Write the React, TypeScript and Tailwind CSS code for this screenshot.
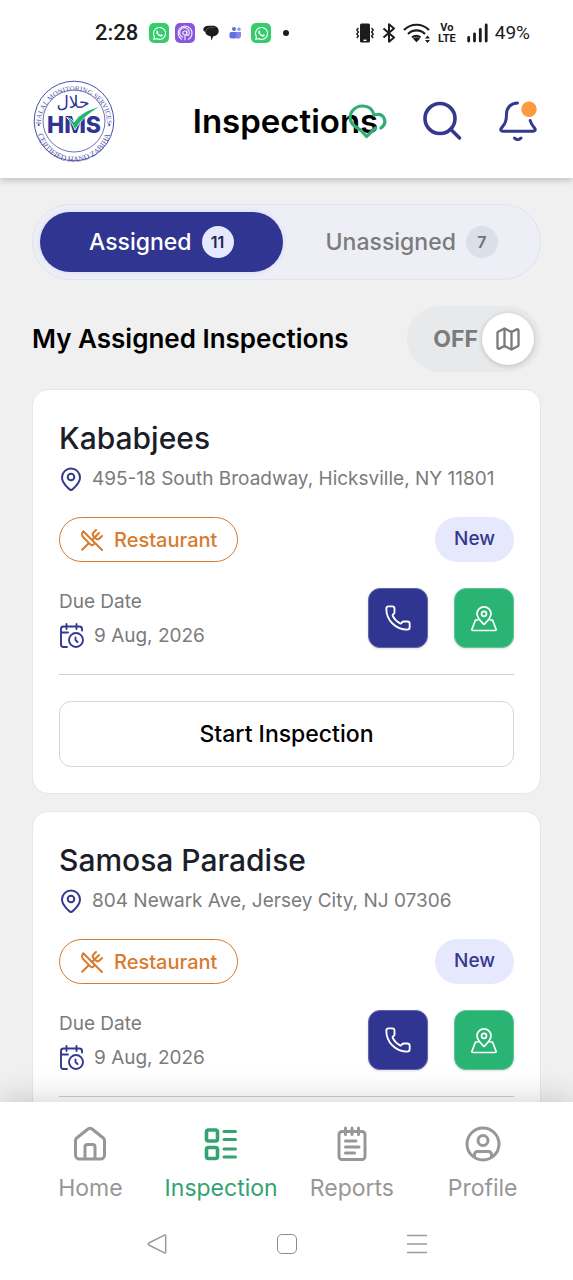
import { useState } from "react";
import type { ReactNode } from "react";
import { FaWhatsapp } from "react-icons/fa";
import { Map, Phone, UtensilsCrossed } from "lucide-react";

type Inspection = { id: number; name: string; address: string; type: string; status: string; due: string };

const inspections: Inspection[] = [
  { id: 1, name: "Kababjees", address: "495-18 South Broadway, Hicksville, NY 11801", type: "Restaurant", status: "New", due: "9 Aug, 2026" },
  { id: 2, name: "Samosa Paradise", address: "804 Newark Ave, Jersey City, NJ 07306", type: "Restaurant", status: "New", due: "9 Aug, 2026" },
];

function StatusBar() {
  return (
    <div className="flex h-16 items-center justify-between pt-[2px] pr-[43px] pl-[95px] font-[Roboto,sans-serif] text-[#1c1c1c]">
      <div className="flex items-center gap-[6px]">
        <span className="mr-[5px] text-[22px] leading-6 font-medium">2:28</span>
        <span className="flex size-5 items-center justify-center rounded-[5px] bg-[#35cc6c] text-white">
          <FaWhatsapp size={15} />
        </span>
        <svg className="size-5" viewBox="0 0 20 20" fill="none" stroke="#f3eaff" strokeWidth="1.2" strokeLinecap="round">
          <rect width="20" height="20" rx="5" fill="#8756dc" stroke="none" />
          <path d="M6.8 16.2a7 7 0 1 1 6.6 0" />
          <path d="M7.8 14a4.8 4.8 0 1 1 5.9-2.2c-.7 1-2 .7-2-.4V7.8" />
          <circle cx="9.8" cy="10" r="2" />
          <path d="M10 12.5v4.2" />
        </svg>
        <svg className="ml-[2px] size-4" viewBox="0 0 16 16" fill="#1c1c1c">
          <path d="M6 .8h4c3.200 0 5.700 2.300 5.700 5.200 0 2.800-2.200 5-5.300 5.200L8.300 15.500 7.800 11.200C4.500 11.200 2.300 9 2.300 6.800 1 6.500.3 5.700.3 4.500.3 2.300 2.600.8 6 .8Z" />
          <path d="M2.500 6.600c.2-2.200 2-3.700 4.800-3.900l4.200-.1" fill="none" stroke="#777" strokeWidth=".6" />
        </svg>
        <svg className="mx-[2px] size-4" viewBox="0 0 16 16">
          <circle cx="7" cy="4" r="2" fill="#5b6ee0" />
          <circle cx="12" cy="4.200" r="1.700" fill="#8b93f0" />
          <path d="M8 7h6v4a3 3 0 0 1-5 2Z" fill="#8a84ea" />
          <rect x="2.500" y="7" width="7" height="6.500" rx="1.800" fill="#5c73e2" />
        </svg>
        <span className="flex size-5 items-center justify-center rounded-[5px] bg-[#35cc6c] text-white">
          <FaWhatsapp size={15} />
        </span>
        <span className="ml-[6px] size-[6px] rounded-full bg-[#1c1c1c]" />
      </div>
      <div className="flex items-center gap-[7px]">
        <svg className="h-5 w-5" viewBox="0 0 20 20" fill="none" stroke="#1c1c1c" strokeWidth="1.400">
          <rect x="5" y=".5" width="10" height="19" rx="1.500" fill="#1c1c1c" stroke="none" />
          <path d="M8.500 17.300h3" stroke="#fff" />
          <path d="M3.400 5 1.800 7l1.600 2-1.600 2 1.600 2-1.600 2M16.600 5l1.600 2-1.600 2 1.600 2-1.600 2 1.600 2" />
        </svg>
        <svg className="h-5 w-[14px]" viewBox="0 0 14 20" fill="none" stroke="#1c1c1c" strokeWidth="2" strokeLinejoin="round">
          <path d="m1.500 5.500 10.500 9L7 18.700V1.300L12 5.500l-10.500 9" />
        </svg>
        <svg className="h-5 w-[28px]" viewBox="0 0 28 20" fill="none" stroke="#1c1c1c" strokeWidth="2.200">
          <path d="M1 7a17.500 17.500 0 0 1 25 0M5 11a12 12 0 0 1 17 0M9 14.500a6.500 6.500 0 0 1 8.500 0" />
          <path d="M10 15.700a5 5 0 0 1 7 0l-3.500 3.500Z" fill="#1c1c1c" stroke="none" />
          <path d="m24.500 12.500 2.500 3h-5ZM24.500 20l2.500-3h-5Z" fill="#1c1c1c" stroke="none" />
        </svg>
        <span className="flex flex-col items-center text-[11px] leading-[11px] font-bold">
          <span>Vo</span>
          <span>LTE</span>
        </span>
        <svg className="ml-1 h-5 w-[21px]" viewBox="0 0 21 20" stroke="#1c1c1c" strokeWidth="2.800" strokeLinecap="round">
          <path d="M1.700 18v-3.500M7.500 18v-7M13.300 18V6.500M19.200 18V2" />
        </svg>
        <span className="text-[19px] leading-6">49%</span>
      </div>
    </div>
  );
}

function Logo() {
  return (
    <svg className="size-[84px] shrink-0" viewBox="0 0 84 84" role="img" aria-label="Halal Monitoring Services">
      <defs>
        <path id="ring-top" d="M8.800 45A33.200 33.200 0 1 1 75.200 45" />
        <path id="ring-bottom" d="M4 45A38 38 0 0 0 80 45" />
      </defs>
      <g fill="none" stroke="#4a4fa8">
        <circle cx="42" cy="42" r="39.800" strokeWidth="1" />
        <circle cx="42" cy="42" r="31" strokeWidth=".8" />
      </g>
      <g fill="#5457a6" fontFamily="Liberation Serif, serif" textAnchor="middle">
        <text fontSize="7">
          <textPath href="#ring-top" startOffset="50%">HALAL MONITORING SERVICES</textPath>
        </text>
        <text fontSize="8">
          <textPath href="#ring-bottom" startOffset="50%">CERTIFIED HAND ZABIHA</textPath>
        </text>
      </g>
      <circle cx="6.700" cy="46" r="1" fill="#2f3590" />
      <circle cx="77.300" cy="46" r="1" fill="#2f3590" />
      <text x="41" y="29" fontFamily="DejaVu Sans, sans-serif" fontSize="17" textAnchor="middle" fill="#2f3590">حلال</text>
      <text x="42" y="54" fontFamily="Inter, sans-serif" fontWeight="800" fontSize="23" textAnchor="middle" fill="#2f3590">HMS</text>
      <path d="M34.500 38.500c3 .3 5.500 2 7.500 4.500C48 35 57 29.500 69 27.500 58 33 48 41.500 43 51c-2-5-4.500-9-8.500-12.500Z" fill="#27b274" stroke="#fff" strokeWidth=".8" />
    </svg>
  );
}

function CloudHeartIcon() {
  return (
    <svg className="size-10" viewBox="0 0 40 40" fill="none" stroke="#33ad76" strokeWidth="3.200" strokeLinecap="round" strokeLinejoin="round">
      <path d="M34 27c7-5 3.500-14-4-13.500-1 0-2 .2-3 .6C25.500 7.500 21 5 15.800 5 6.500 5 1 13 4 20.500 5.500 24 9 26.500 13.500 29l6 6.500 9-8.500" />
    </svg>
  );
}

function SearchIcon() {
  return (
    <svg className="size-10" viewBox="0 0 40 40" fill="none" stroke="#35388f" strokeWidth="3.600" strokeLinecap="round">
      <circle cx="17" cy="17.500" r="15" />
      <path d="m28 28.500 8.500 8.500" />
    </svg>
  );
}

function BellIcon() {
  return (
    <svg className="size-10" viewBox="0 0 40 40" fill="none" stroke="#35388f" strokeWidth="3" strokeLinecap="round" strokeLinejoin="round">
      <path d="M18.500 2C12 2 7.500 6.800 7.500 13c0 8.500-2 10-5 14-1.500 2-.5 3.300 1.500 3.300h30c2 0 3-1.300 1.500-3.300-2-2.500-3.500-4-4.300-7.500" />
      <path d="M15.500 37c2 2.200 4.500 2.200 6.500 0" />
      <circle cx="30" cy="8.300" r="7.700" fill="#fd9940" stroke="none" />
    </svg>
  );
}

function PinIcon() {
  return (
    <svg className="size-6 shrink-0" viewBox="0 0 24 24" fill="none" stroke="#35388f" strokeWidth="2" strokeLinejoin="round">
      <path d="M12 1.500a9 9 0 0 0-9 9c0 5.500 4.500 9 7.500 11.800a2.200 2.200 0 0 0 3 0C16.500 19.500 21 16 21 10.500a9 9 0 0 0-9-9Z" />
      <circle cx="12" cy="10" r="3.300" />
    </svg>
  );
}

function CalendarClockIcon() {
  return (
    <svg className="size-[26px] shrink-0" viewBox="0 0 26 26" fill="none" stroke="#35388f" strokeWidth="1.900" strokeLinecap="round" strokeLinejoin="round">
      <path d="M8 24H4.500A2.500 2.500 0 0 1 2 21.500V6a2.500 2.500 0 0 1 2.500-2.500h16A2.500 2.500 0 0 1 23 6v1.500M2 9.500h7M7.500 1v5M17.500 1v5" />
      <circle cx="17" cy="17" r="7" />
      <path d="M16.500 14.500V17l2 2" />
    </svg>
  );
}

function LocationMapIcon() {
  return (
    <svg className="size-7" viewBox="0 0 28 28" fill="none" stroke="#fff" strokeWidth="1.700" strokeLinejoin="round" strokeLinecap="round">
      <path d="M14 20.500c4-4 7-6.500 7-10.700a7 7 0 0 0-14 0c0 4.200 3 6.700 7 10.700Z" />
      <circle cx="14" cy="9.800" r="2.500" />
      <path d="M8 16H5.500L2 25q-.5 1.500 1 1.500h22q1.500 0 1-1.500l-3.500-9H20" />
    </svg>
  );
}

function InspectionCard({ item }: { item: Inspection }) {
  return (
    <article className="rounded-2xl border border-[#e6e6e6] bg-white p-[26px]">
      <h3 className="text-[30px] leading-[44px] font-medium text-[#1b1e29]">{item.name}</h3>
      <p className="flex h-[38px] items-center gap-[9px] text-[19px] whitespace-nowrap text-[#7b7b7b]">
        <PinIcon />
        {item.address}
      </p>
      <div className="mt-[19px] flex h-[45px] items-stretch justify-between">
        <span className="flex items-center gap-[10px] rounded-full border border-[#d77b2e] px-5 text-[20px] font-medium text-[#d77b2e]">
          <UtensilsCrossed size={24} strokeWidth={2} />
          {item.type}
        </span>
        <span className="flex items-center rounded-full bg-[#e6e8fd] px-[19px] text-[19px] font-medium text-[#35388f]">{item.status}</span>
      </div>
      <div className="mt-[26px] flex h-[60px] items-center justify-between">
        <dl className="pt-[3px] text-[19px] text-[#7b7b7b]">
          <dt className="leading-8">Due Date</dt>
          <dd className="flex items-center gap-[9px] leading-9">
            <CalendarClockIcon />
            {item.due}
          </dd>
        </dl>
        <div className="flex gap-[26px]">
          <button type="button" aria-label={`Call ${item.name}`} className="flex size-[60px] items-center justify-center rounded-xl border border-[#6267ac] bg-[#2f3590] text-white shadow-sm">
            <Phone size={28} strokeWidth={1.6} />
          </button>
          <button type="button" aria-label={`Directions to ${item.name}`} className="flex size-[60px] items-center justify-center rounded-xl border border-[#5fc597] bg-[#2ab474] shadow-sm">
            <LocationMapIcon />
          </button>
        </div>
      </div>
      <hr className="mt-[26px] border-t border-[#cfcfcf]" />
      <button type="button" className="mt-[26px] h-[66px] w-full rounded-xl border border-[#d6d6d6] text-[23px] font-medium text-black">
        Start Inspection
      </button>
    </article>
  );
}

function NavIcon({ children }: { children: ReactNode }) {
  return (
    <svg className="size-9" viewBox="0 0 36 36" fill="none" stroke="currentColor" strokeWidth="3" strokeLinecap="round" strokeLinejoin="round">
      {children}
    </svg>
  );
}

const navItems = [
  {
    label: "Home",
    icon: (
      <NavIcon>
        <path d="M3.500 14.500q0-1.500 1.200-2.500L16 3q2-1.400 4 0l11.300 9q1.200 1 1.200 2.500V29a4 4 0 0 1-4 4h-21a4 4 0 0 1-4-4Z" />
        <path d="M13 32.500V21a2.500 2.500 0 0 1 2.500-2.500h5A2.500 2.500 0 0 1 23 21v11.500" />
      </NavIcon>
    ),
  },
  {
    label: "Inspection",
    icon: (
      <NavIcon>
        <g strokeWidth="3.600">
          <rect x="3.500" y="4" width="11" height="11" rx="2" />
          <rect x="3.500" y="21.500" width="11" height="11" rx="2" />
        </g>
        <path d="M21 5.500h11.500M21 13.500h11.500M21 23h11.500M21 31h11.500" />
      </NavIcon>
    ),
  },
  {
    label: "Reports",
    icon: (
      <NavIcon>
        <rect x="5" y="5.500" width="26" height="28" rx="3" />
        <path d="M11.500 2v6.500M18 2v6.500M24.500 2v6.500M11.500 15h10.500M11.500 21h13.500M11.500 27h9" />
      </NavIcon>
    ),
  },
  {
    label: "Profile",
    icon: (
      <NavIcon>
        <circle cx="18" cy="18" r="16" />
        <circle cx="18" cy="14.500" r="5" />
        <path d="M9.500 31v-2.500a3 3 0 0 1 3-3h11a3 3 0 0 1 3 3V31" />
      </NavIcon>
    ),
  },
];

export default function App() {
  const [tab, setTab] = useState("Assigned");
  const tabs = [
    { label: "Assigned", count: 11 },
    { label: "Unassigned", count: 7 },
  ];

  return (
    <div className="flex h-screen flex-col bg-[#f0f0f0] font-[Inter,sans-serif]">
      <header className="relative z-10 bg-white shadow-[0_2px_7px_rgba(0,0,0,0.22)]">
        <StatusBar />
        <div className="grid h-[114px] grid-cols-[minmax(0,1fr)_auto_minmax(0,1fr)] items-center pr-[34px] pl-8">
          <Logo />
          <h1 className="text-[33px] leading-10 font-semibold text-black">Inspections</h1>
          <div className="flex justify-end gap-9">
            <button type="button" aria-label="Sync status"><CloudHeartIcon /></button>
            <button type="button" aria-label="Search"><SearchIcon /></button>
            <button type="button" aria-label="Notifications"><BellIcon /></button>
          </div>
        </div>
      </header>

      <main className="min-h-0 flex-1 overflow-y-auto px-8 pt-[26px] [scrollbar-width:none]">
        <div role="tablist" className="flex gap-2 rounded-full border border-[#e0e2f0] bg-[#eeeff6] p-[7px]">
          {tabs.map(({ label, count }) => {
            const active = tab === label;
            return (
              <button
                key={label}
                type="button"
                role="tab"
                aria-selected={active}
                onClick={() => setTab(label)}
                className={`flex h-[60px] flex-1 items-center justify-center gap-[10px] rounded-full text-[23px] font-medium ${active ? "bg-[#2f3590] text-white shadow-[0_0_6px_#d5d8fb]" : "text-[#7b7b7b]"}`}
              >
                {label}
                <span className={`flex size-8 items-center justify-center rounded-full text-[16px] font-semibold ${active ? "bg-[#e6e8fd] text-[#22244f]" : "bg-[#dadfe8] text-[#6d7178]"}`}>
                  {count}
                </span>
              </button>
            );
          })}
        </div>

        <div className="mt-[26px] flex items-center justify-between">
          <h2 className="text-[26px] leading-9 font-semibold whitespace-nowrap text-black">My Assigned Inspections</h2>
          <button type="button" role="switch" aria-checked="false" aria-label="Map view" className="flex h-[66px] items-center gap-1 rounded-full bg-[#e8e9ea] pr-[7px] pl-[26px] text-[23px] font-bold text-[#7a7b7d]">
            OFF
            <span className="flex size-[52px] items-center justify-center rounded-full bg-white shadow-[0_1px_5px_rgba(0,0,0,0.2)]">
              <Map size={28} strokeWidth={2} />
            </span>
          </button>
        </div>

        <div className="mt-[17px] flex flex-col gap-[17px] pb-8">
          {inspections.map((item) => (
            <InspectionCard key={item.id} item={item} />
          ))}
        </div>
      </main>

      <footer className="relative z-10 bg-white shadow-[0_-4px_28px_rgba(0,0,0,0.16)]">
        <nav className="flex px-[25px] pt-6">
          {navItems.map(({ label, icon }) => (
            <a
              key={label}
              href={`#${label.toLowerCase()}`}
              className={`flex flex-1 flex-col items-center gap-[10px] text-[23px] leading-8 ${label === "Inspection" ? "text-[#33a371]" : "text-[#979797]"}`}
            >
              {icon}
              {label}
            </a>
          ))}
        </nav>
        <div className="flex h-[76px] items-center justify-center gap-[110px] pt-1 text-[#9a9a9a]">
          <button type="button" aria-label="Back">
            <svg className="size-5" viewBox="0 0 20 20" fill="none" stroke="currentColor" strokeWidth="1.500" strokeLinejoin="round">
              <path d="M17 1.300q1.700-.8 1.700 1v15.400q0 1.800-1.700 1L1.800 11q-1.400-1 0-2Z" />
            </svg>
          </button>
          <button type="button" aria-label="Home screen" className="size-5 rounded-[5px] border border-[#8c8c8c]" />
          <button type="button" aria-label="Recent apps">
            <svg className="size-5" viewBox="0 0 20 20" stroke="currentColor" strokeWidth="1.600">
              <path d="M0 1.500h20M0 10h20M0 18.500h20" />
            </svg>
          </button>
        </div>
      </footer>
    </div>
  );
}
